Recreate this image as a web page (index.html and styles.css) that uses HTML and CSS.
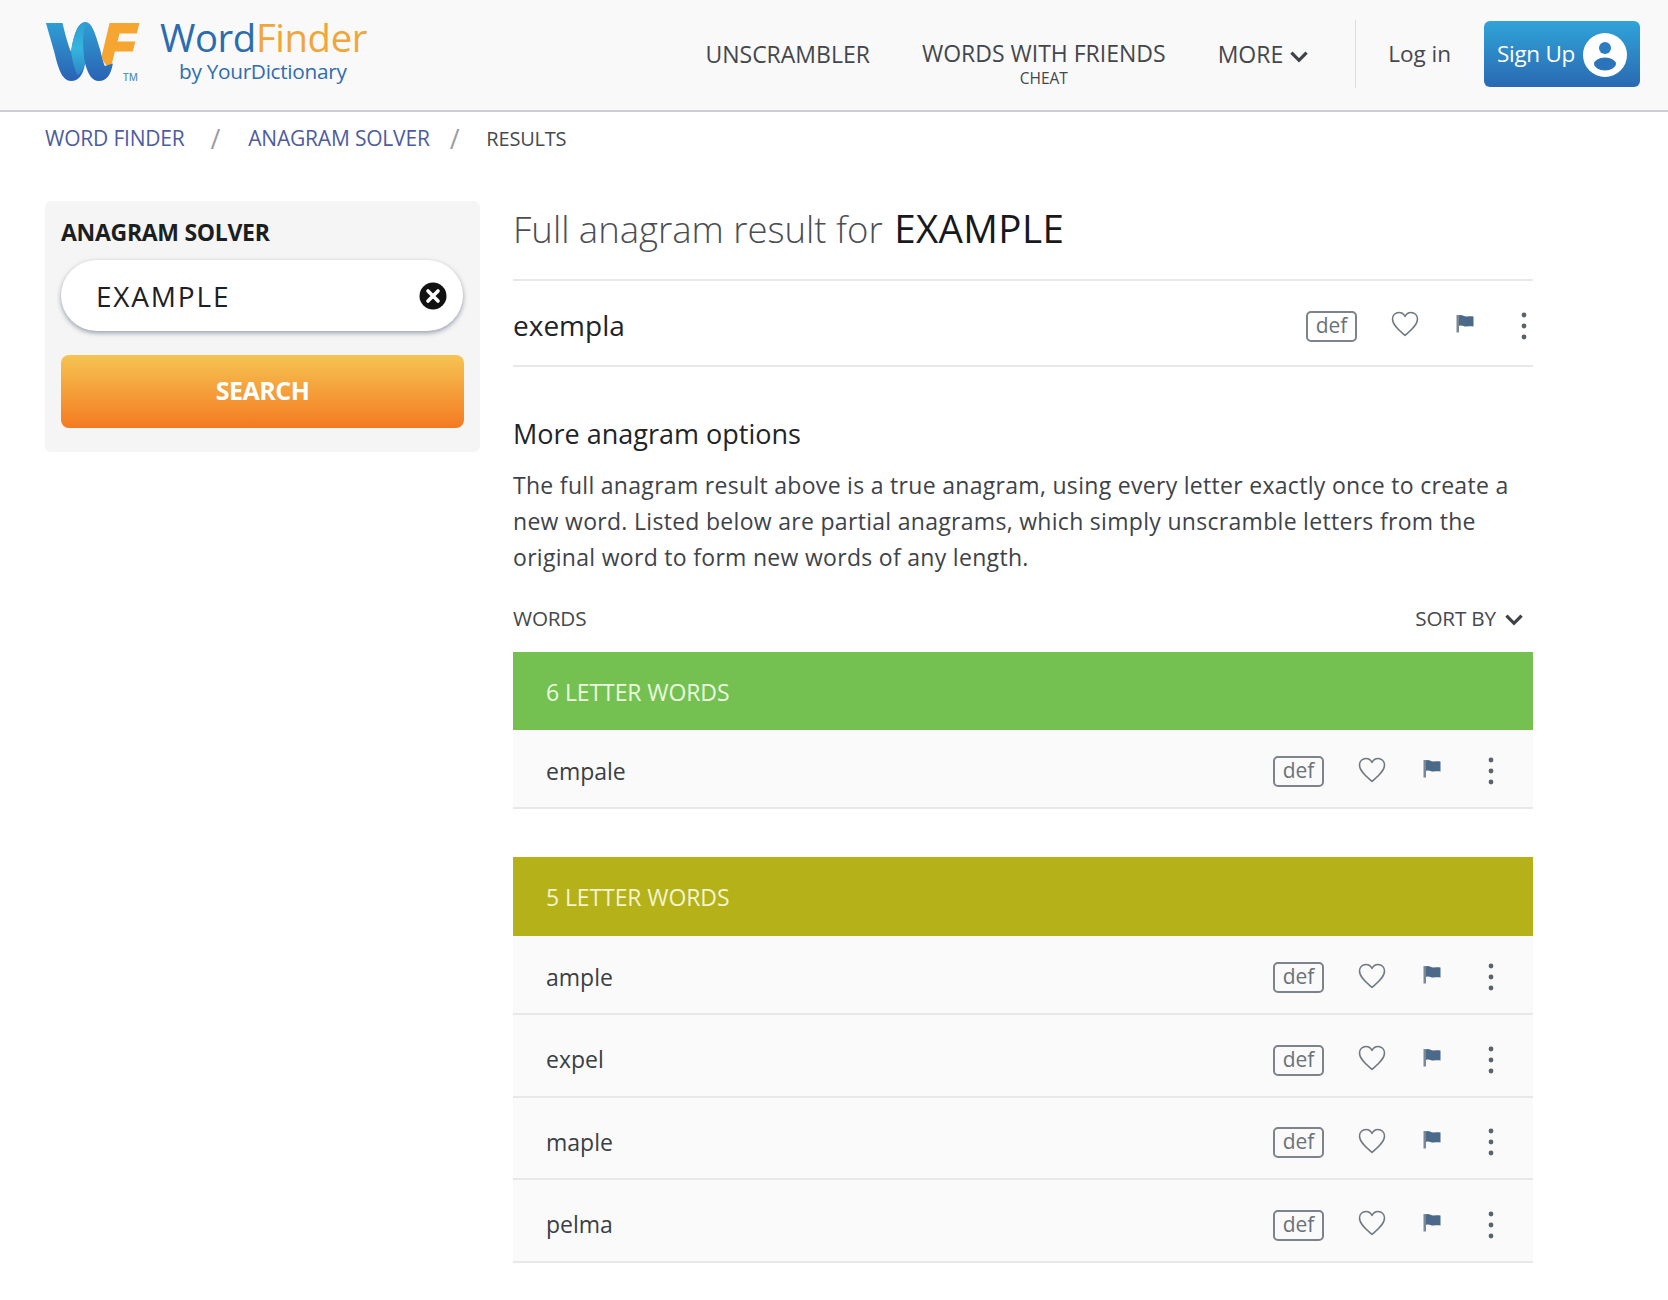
FILE: index.html
```html
<!DOCTYPE html>
<html lang="en">
<head>
<meta charset="utf-8">
<title>Anagram Solver Results</title>
<link rel="stylesheet" href="styles.css">
</head>
<body>
<svg class="defs" width="0" height="0" aria-hidden="true">
  <defs>
    <linearGradient id="wblue" x1="0" y1="0" x2="0" y2="1"><stop offset="0" stop-color="#2f9fd4"/><stop offset="1" stop-color="#2a62b4"/></linearGradient>
    <linearGradient id="wlight" x1="0" y1="0" x2="0" y2="1"><stop offset="0" stop-color="#2f9ed3"/><stop offset="0.5" stop-color="#35b5dd"/><stop offset="1" stop-color="#2f86c8"/></linearGradient>
    <symbol id="heart" viewBox="0 0 28 26"><path d="M14 24.500C9 20 1.500 14.500 1.500 8C1.500 4 4.500 1.500 8 1.500C10.500 1.500 12.800 3 14 5.500C15.200 3 17.500 1.500 20 1.500C23.500 1.500 26.500 4 26.500 8C26.500 14.500 19 20 14 24.500Z" fill="none" stroke="#6f7780" stroke-width="1.500" stroke-linejoin="round"/></symbol>
    <symbol id="flag" viewBox="0 0 18 19"><path d="M0.500 1H3V18.500H0.500Z" fill="#7a8794"/><path d="M3 1.500C6 0 8 3 11 2.500C13 2.200 15 2 17.500 2.500V12.500C15 12 13 12.200 11 12.500C8 13 6 10.500 3 12Z" fill="#4b6a8a"/></symbol>
    <symbol id="kebab" viewBox="0 0 6 28"><circle cx="3" cy="3" r="2.400" fill="#5a626b"/><circle cx="3" cy="14" r="2.400" fill="#5a626b"/><circle cx="3" cy="25" r="2.400" fill="#5a626b"/></symbol>
    <symbol id="chev" viewBox="0 0 18 12"><path d="M2 2.500L9 9.500L16 2.500" fill="none" stroke="#3d4248" stroke-width="3"/></symbol>
  </defs>
</svg>

<header class="site-header">
  <a class="brand" href="#">
    <svg class="logo-mark" viewBox="28 22 288 184" aria-hidden="true">
      <path fill="#f6a531" d="M222 28H312L304 60H252L246 84H300L292 114H238L226 162C214 160 204 150 198 128Z"/>
      <path fill="url(#wblue)" d="M30 28H80C88 62 98 100 106 115C113 68 125 25 150 25C170 25 182 70 194 110C198 128 204 150 208 158L232 150C226 185 212 203 190 203C170 203 158 185 148 150C142 185 128 203 106 203C80 203 68 170 55 115Z"/>
      <path fill="url(#wlight)" d="M106 115C113 68 125 25 150 25C140 60 140 100 148 150C142 170 135 180 125 186C115 165 108 135 106 115Z"/>
    </svg>
    <span class="tm">TM</span>
    <span class="brand-text">
      <span class="brand-name"><span class="brand-word">Word</span><span class="brand-finder">Finder</span></span>
      <span class="brand-by">by YourDictionary</span>
    </span>
  </a>
  <nav class="main-nav">
    <a class="nav-link" href="#">UNSCRAMBLER</a>
    <a class="nav-link nav-stack" href="#">WORDS WITH FRIENDS<small>CHEAT</small></a>
    <a class="nav-link nav-more" href="#">MORE <svg class="chev"><use href="#chev"/></svg></a>
    <span class="nav-sep"></span>
    <a class="nav-login" href="#">Log in</a>
    <a class="signup" href="#"><span class="signup-label">Sign Up</span>
      <svg class="avatar" viewBox="0 0 44 44" aria-hidden="true"><circle cx="22" cy="22" r="22" fill="#fff"/><circle cx="22" cy="15" r="6" fill="#2b7cc0"/><ellipse cx="22" cy="31" rx="11" ry="6.500" fill="#2b74bc"/></svg>
    </a>
  </nav>
</header>

<nav class="crumbs">
  <a href="#">WORD FINDER</a><span class="slash first">/</span><a href="#">ANAGRAM SOLVER</a><span class="slash">/</span><span class="crumb-here">RESULTS</span>
</nav>

<div class="layout">
  <aside class="solver">
    <h2 class="solver-title">ANAGRAM SOLVER</h2>
    <div class="solver-input">
      <span class="solver-value">EXAMPLE</span>
      <svg class="clear" viewBox="0 0 28 28" aria-hidden="true"><circle cx="14" cy="14" r="13.500" fill="#111"/><path d="M9 9L19 19M19 9L9 19" stroke="#fff" stroke-width="3.600" stroke-linecap="round"/></svg>
    </div>
    <button class="solver-btn">SEARCH</button>
  </aside>

  <main class="content">
    <h1 class="result-title">Full anagram result for <strong>EXAMPLE</strong></h1>
    <div class="top-word">
      <span class="top-name">exempla</span>
      <div class="actions">
        <span class="def">def</span>
        <svg class="ic-heart"><use href="#heart"/></svg>
        <svg class="ic-flag"><use href="#flag"/></svg>
        <svg class="ic-kebab"><use href="#kebab"/></svg>
      </div>
    </div>
    <h3 class="more-title">More anagram options</h3>
    <p class="more-text">The full anagram result above is a true anagram, using every letter exactly once to create a new word. Listed below are partial anagrams, which simply unscramble letters from the original word to form new words of any length.</p>
    <div class="list-head">
      <span>WORDS</span>
      <span class="sort">SORT BY <svg class="chev"><use href="#chev"/></svg></span>
    </div>

    <section class="group">
      <h4 class="group-head green">6 LETTER WORDS</h4>
      <div class="row">
        <span class="word">empale</span>
        <div class="actions"><span class="def">def</span><svg class="ic-heart"><use href="#heart"/></svg><svg class="ic-flag"><use href="#flag"/></svg><svg class="ic-kebab"><use href="#kebab"/></svg></div>
      </div>
    </section>

    <section class="group">
      <h4 class="group-head olive">5 LETTER WORDS</h4>
      <div class="row">
        <span class="word">ample</span>
        <div class="actions"><span class="def">def</span><svg class="ic-heart"><use href="#heart"/></svg><svg class="ic-flag"><use href="#flag"/></svg><svg class="ic-kebab"><use href="#kebab"/></svg></div>
      </div>
      <div class="row">
        <span class="word">expel</span>
        <div class="actions"><span class="def">def</span><svg class="ic-heart"><use href="#heart"/></svg><svg class="ic-flag"><use href="#flag"/></svg><svg class="ic-kebab"><use href="#kebab"/></svg></div>
      </div>
      <div class="row">
        <span class="word">maple</span>
        <div class="actions"><span class="def">def</span><svg class="ic-heart"><use href="#heart"/></svg><svg class="ic-flag"><use href="#flag"/></svg><svg class="ic-kebab"><use href="#kebab"/></svg></div>
      </div>
      <div class="row">
        <span class="word">pelma</span>
        <div class="actions"><span class="def">def</span><svg class="ic-heart"><use href="#heart"/></svg><svg class="ic-flag"><use href="#flag"/></svg><svg class="ic-kebab"><use href="#kebab"/></svg></div>
      </div>
    </section>
  </main>
</div>
</body>
</html>
```
FILE: styles.css
```css
* { box-sizing: border-box; }
html, body { margin: 0; padding: 0; }
body { height: 1300px; overflow: hidden; background: #fff; color: #3a3f45; font-family: "Open Sans", "Noto Sans", sans-serif; }
a { color: inherit; text-decoration: none; }
.defs { display: block; height: 0; width: 0; }

.site-header { height: 112px; background: #f9f9f9; border-bottom: 2px solid #ccced1; display: flex; align-items: center; justify-content: space-between; padding: 0 28px 0 45px; }
.brand { display: flex; align-items: flex-start; position: relative; height: 80px; }
.logo-mark { width: 96px; height: 61px; margin-top: 6px; display: block; }
.tm { position: absolute; left: 78px; top: 56px; font-size: 10px; line-height: 12px; font-weight: 600; color: #5b92b8; }
.brand-text { display: flex; flex-direction: column; margin-left: 19px; }
.brand-name { display: flex; font-size: 38.300px; line-height: 42px; margin-top: 1px; letter-spacing: -0.4px; }
.brand-word { color: #2b6cae; }
.brand-finder { color: #f1a63a; }
.brand-by { font-size: 20.800px; line-height: 24px; margin: 1px 0 0 19px; color: #2f6db0; letter-spacing: -0.3px; }

.main-nav { display: flex; align-items: center; height: 68px; margin-top: -3px; }
.nav-link { font-size: 23px; color: #43474c; line-height: 28px; }
.nav-link + .nav-link { margin-left: 52px; }
.nav-stack { display: flex; flex-direction: column; align-items: center; padding-top: 18px; }
.nav-stack small { font-size: 15.500px; line-height: 18px; margin-top: 2px; }
.chev { width: 20px; height: 13px; display: inline-block; }
.nav-sep { width: 1px; height: 68px; background: #dcdddf; margin: 0 32px 0 46px; }
.nav-login { font-size: 22.500px; color: #44484d; margin: 0 33px 0 0; }
.signup { width: 156px; height: 66px; border-radius: 6px; background: linear-gradient(#30a4d8, #2a69b2); color: #fff; font-size: 22.500px; display: flex; align-items: center; justify-content: space-between; padding: 0 13px; letter-spacing: -0.3px; }
.avatar { width: 44px; height: 44px; display: block; margin-top: 2px; }

.crumbs { height: 52px; margin-bottom: 2px; padding-left: 45px; display: flex; align-items: center; font-size: 21px; color: #4d5ca0; letter-spacing: -0.2px; }
.slash { color: #9a9ea3; font-size: 27px; margin: 0 27px 0 20px; }
.slash.first { margin: 0 28px 0 26px; }
.crumb-here { color: #45494e; font-size: 20px; }

.layout { display: flex; align-items: flex-start; padding: 35px 0 0 45px; gap: 33px; }

.solver { width: 435px; height: 251px; background: #f5f5f5; border-radius: 6px; padding: 15px 16px 0; flex: none; }
.solver-title { margin: 0; font-size: 23px; line-height: 32px; font-weight: 700; color: #1c1f22; letter-spacing: -0.3px; }
.solver-input { margin-top: 12px; height: 71px; width: 402px; background: #fff; border-radius: 36px; box-shadow: 0 2px 5px rgba(70, 85, 110, 0.55); display: flex; align-items: center; justify-content: space-between; padding: 0 16px 0 35px; }
.solver-value { font-size: 28px; color: #1d2024; letter-spacing: 1.800px; }
.clear { width: 28px; height: 28px; display: block; }
.solver-btn { display: block; margin: 24px 0 0; width: 403px; height: 73px; padding-bottom: 4px; border: 0; border-radius: 8px; background: linear-gradient(#f6c452, #f47a22); color: #fff; font: 700 25px "Open Sans", sans-serif; letter-spacing: -0.5px; }

.content { width: 1020px; flex: none; }
.result-title { margin: 0; height: 80px; padding-top: 1px; border-bottom: 2px solid #e8e8e8; font-size: 36.500px; line-height: 52px; font-weight: 300; color: #4a4e53; }
.result-title strong { font-size: 38.500px; font-weight: 500; color: #17191c; letter-spacing: 0.4px; margin-left: 2px; }
.top-word { height: 86px; padding-top: 4px; border-bottom: 2px solid #e8e8e8; display: flex; align-items: center; justify-content: space-between; }
.top-name { font-size: 28px; font-weight: 500; color: #212428; }
.top-word .actions { padding-right: 6px; }
.actions { display: flex; align-items: center; margin-top: 2px; }
.def { width: 51px; height: 31px; border: 2px solid #7c838b; border-radius: 5px; font-size: 21px; line-height: 25px; color: #6b7279; text-align: center; display: block; }
.ic-heart { width: 28px; height: 26px; margin-left: 34px; margin-top: -4px; display: block; }
.ic-flag { width: 18px; height: 19px; margin-left: 37px; margin-top: -6px; display: block; }
.ic-kebab { width: 6px; height: 28px; margin-left: 47px; margin-top: -1px; display: block; }

.more-title { margin: 47px 0 0; font-size: 27px; line-height: 40px; font-weight: 500; color: #212428; }
.more-text { margin: 13px 0 0; font-size: 23px; line-height: 36px; color: #3e4349; letter-spacing: 0.300px; }
.list-head { display: flex; justify-content: space-between; align-items: center; height: 32px; margin-top: 27px; font-size: 20.700px; color: #45494e; padding-right: 9px; letter-spacing: -0.2px; }
.sort .chev { margin-left: 3px; }

.group { margin-bottom: 48px; }
.group-head { margin: 18px 0 0; height: 78px; padding-left: 33px; font-size: 23px; line-height: 80px; font-weight: 400; color: #eafbe0; letter-spacing: -0.1px; }
.green { background: #74c152; }
.olive { background: #b5b119; margin-top: 0; height: 79px; color: #f2f4cf; }
.row { height: 82.500px; padding: 8px 39px 0 33px; background: #fafafa; border-bottom: 2px solid #e8e8e8; display: flex; align-items: center; justify-content: space-between; }
.group-head + .row { height: 79px; padding-top: 4px; }
.word { font-size: 23px; color: #3a3f45; }
```
